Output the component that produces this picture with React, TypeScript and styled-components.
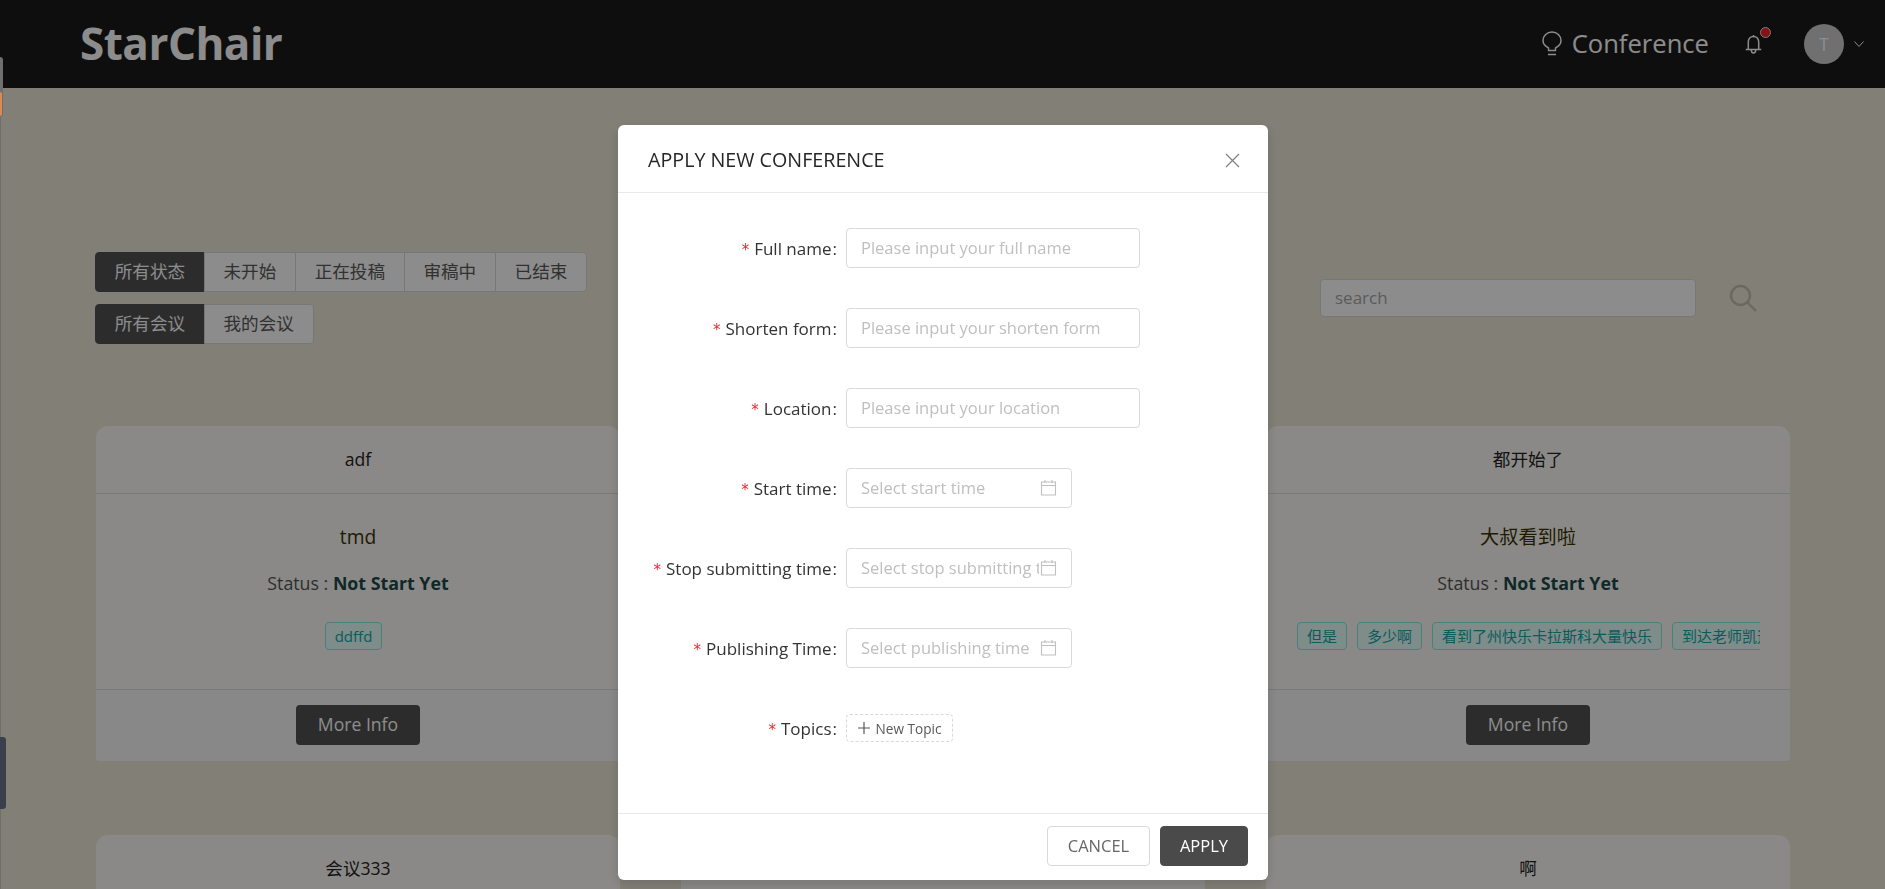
import React from "react";
import styled, { createGlobalStyle } from "styled-components";

const SANS = `"Open Sans", "Noto Sans CJK SC", sans-serif`;

const Global = createGlobalStyle`
  html, body {
    margin: 0;
    height: 100%;
    overflow: hidden;
  }
  body {
    font-family: ${SANS};
    background: #ece7d8;
  }
  * { box-sizing: border-box; }
`;

const Page = styled.div`
  height: 889px;
  overflow: hidden;
  background: #ece7d8;
`;

const Header = styled.header`
  height: 88px;
  background: #1b1b1b;
  display: flex;
  align-items: center;
  justify-content: space-between;
  padding: 0 21px 0 80px;
`;

const Logo = styled.div`
  color: #fff;
  font-size: 44px;
  font-weight: 700;
  letter-spacing: -0.5px;
  margin-bottom: 3px;
`;

const Nav = styled.nav`
  display: flex;
  align-items: center;
`;

const NavLink = styled.div`
  display: flex;
  align-items: center;
  gap: 10px;
  color: #fff;
  font-size: 25.6px;
  margin-right: 36px;
  margin-bottom: 2px;
`;

const BellWrap = styled.div`
  position: relative;
  width: 17px;
  height: 22px;
  margin: 2px 42px 0 0;
  color: #fff;
`;

const Dot = styled.span`
  position: absolute;
  top: -7px;
  right: -9px;
  width: 11px;
  height: 11px;
  border-radius: 50%;
  background: #f5222d;
  border: 1px solid #ddd;
`;

const Avatar = styled.div`
  width: 40px;
  height: 40px;
  border-radius: 50%;
  background: #ccc;
  color: #fff;
  font-size: 18px;
  display: flex;
  align-items: center;
  justify-content: center;
  margin-right: 10px;
`;

const Main = styled.main`
  padding: 164px 95px 0 96px;
`;

const Filters = styled.section`
  display: flex;
  justify-content: space-between;
  margin-left: -1px;
  padding-right: 33px;
  margin-bottom: 82px;
`;

const FilterGroups = styled.div`
  display: flex;
  flex-direction: column;
  align-items: flex-start;
  gap: 12px;
`;

const Segments = styled.div`
  display: flex;
`;

const Segment = styled.div<{ $active?: boolean }>`
  height: 40px;
  line-height: 36px;
  padding: 0 18.7px;
  font-size: 17.6px;
  border: 1px solid ${(p) => (p.$active ? "#505050" : "#d9d9d9")};
  margin-left: -1px;
  background: ${(p) => (p.$active ? "#505050" : "#fff")};
  color: ${(p) => (p.$active ? "#fff" : "#595959")};
  &:first-child {
    margin-left: 0;
    border-radius: 4px 0 0 4px;
  }
  &:last-child {
    border-radius: 0 4px 4px 0;
  }
`;

const SearchRow = styled.div`
  display: flex;
  align-items: center;
  gap: 33px;
  height: 38px;
  margin-top: 27px;
`;

const SearchInput = styled.input`
  width: 376px;
  height: 38px;
  border: 1px solid #d9d9d9;
  border-radius: 4px;
  background: #fff;
  padding: 0 14px 2px;
  font-family: ${SANS};
  font-size: 17px;
  &::placeholder {
    color: #a6a6a6;
    opacity: 1;
  }
`;

const Cards = styled.section`
  display: grid;
  grid-template-columns: repeat(3, 524px);
  justify-content: space-between;
  row-gap: 74px;
`;

const Card = styled.article`
  height: 335px;
  background: #fbfaf6;
  border-radius: 12px 12px 4px 4px;
  display: flex;
  flex-direction: column;
  text-align: center;
`;

const CardTitle = styled.div`
  height: 68px;
  line-height: 66px;
  font-size: 17.6px;
  color: #222;
  border-bottom: 1px solid #ddd;
`;

const CardBody = styled.div`
  height: 195px;
  padding-top: 27px;
`;

const Subject = styled.div`
  font-size: 19.2px;
  line-height: 32px;
  color: #3a3300;
`;

const Status = styled.div`
  font-size: 17.8px;
  line-height: 30px;
  margin-top: 15px;
  color: #555;
`;

const StatusValue = styled.b`
  color: #1d4a4a;
`;

const TagRow = styled.div`
  margin: 24px 30px 0 31px;
  white-space: nowrap;
  overflow: hidden;
  height: 30px;
`;

const Tag = styled.span`
  display: inline-block;
  height: 28px;
  line-height: 26px;
  padding: 0 9px;
  margin-right: 10px;
  font-size: 15px;
  color: #13a8a8;
  background: #e6fffb;
  border: 1px solid #87e8de;
  border-radius: 4px;
`;

const CardFooter = styled.div`
  flex: 1;
  background: #f7f7f7;
  border-top: 1px solid #ddd;
  border-radius: 0 0 4px 4px;
  padding-top: 15px;
`;

const MoreButton = styled.button`
  width: 124px;
  height: 40px;
  border: none;
  border-radius: 4px;
  background: #505050;
  color: #fff;
  padding: 0 0 2px;
  font-family: ${SANS};
  font-size: 17.6px;
`;

const Mask = styled.div`
  position: fixed;
  inset: 0;
  background: rgba(0, 0, 0, 0.45);
`;

const ModalWrap = styled.div`
  position: fixed;
  inset: 0;
  display: flex;
  justify-content: center;
  padding: 125px 0 0 1px;
`;

const Modal = styled.div`
  width: 650px;
  height: 755px;
  background: #fff;
  border-radius: 6px;
  box-shadow: 0 4px 12px rgba(0, 0, 0, 0.15);
  display: flex;
  flex-direction: column;
`;

const ModalHeader = styled.div`
  height: 68px;
  padding: 1px 28px 0 30px;
  border-bottom: 1px solid #e8e8e8;
  display: flex;
  align-items: center;
  justify-content: space-between;
  font-size: 19.7px;
  color: #262626;
`;

const CloseIcon = styled.svg`
  width: 15px;
  height: 15px;
  margin-top: 2px;
  stroke: #808080;
  stroke-width: 1.2;
`;

const ModalForm = styled.form`
  flex: 1;
  padding-top: 35px;
  display: flex;
  flex-direction: column;
  gap: 40px;
`;

const FormRow = styled.div`
  display: flex;
  align-items: center;
  height: 40px;
`;

const Label = styled.label`
  width: 228px;
  text-align: right;
  padding-right: 9px;
  font-size: 17px;
  color: #333;
  white-space: nowrap;
`;

const Star = styled.span`
  color: #f5222d;
  font-family: "DejaVu Sans", sans-serif;
  font-size: 15px;
  margin-right: 5px;
`;

const Colon = styled.span`
  margin-left: 1px;
`;

const TextInput = styled.input`
  width: 294px;
  height: 40px;
  border: 1px solid #d9d9d9;
  border-radius: 4px;
  padding: 0 14px 1px;
  font-family: ${SANS};
  font-size: 16.5px;
  &::placeholder {
    color: #bfbfbf;
    opacity: 1;
  }
`;

const DateBox = styled.div`
  position: relative;
  width: 226px;
  height: 40px;
`;

const DateInput = styled(TextInput)`
  width: 100%;
  padding-right: 32px;
`;

const DateIcon = styled.svg`
  position: absolute;
  right: 15px;
  top: 11px;
  width: 17px;
  height: 17px;
  fill: none;
  stroke: #bfbfbf;
  stroke-width: 1.1;
`;

const NewTopic = styled.div`
  height: 28px;
  width: 107px;
  border: 1px dashed #d9d9d9;
  border-radius: 4px;
  display: flex;
  align-items: center;
  justify-content: center;
  gap: 6px;
  font-size: 13.6px;
  color: #595959;
`;

const ModalFooter = styled.div`
  height: 67px;
  border-top: 1px solid #e8e8e8;
  display: flex;
  justify-content: flex-end;
  align-items: center;
  gap: 10px;
  padding: 0 20px 2px 0;
`;

const FooterButton = styled.button<{ $primary?: boolean }>`
  height: 40px;
  width: ${(p) => (p.$primary ? 88 : 103)}px;
  border-radius: 4px;
  padding: 0 0 2px;
  font-family: ${SANS};
  font-size: 16.5px;
  border: 1px solid ${(p) => (p.$primary ? "#4a4a4a" : "#d9d9d9")};
  background: ${(p) => (p.$primary ? "#4a4a4a" : "#fff")};
  color: ${(p) => (p.$primary ? "#fff" : "#666")};
`;

const EdgeTab = styled.div<{ $top: number; $height: number; $width: number; $color: string }>`
  position: fixed;
  left: 0;
  top: ${(p) => p.$top}px;
  height: ${(p) => p.$height}px;
  width: ${(p) => p.$width}px;
  background: ${(p) => p.$color};
  border-radius: 0 3px 3px 0;
`;

const EdgeLine = styled.div`
  position: fixed;
  left: 0;
  top: 117px;
  bottom: 0;
  width: 1px;
  background: #6f6f6f;
`;

const Bulb = () => (
  <svg width="20" height="25" viewBox="0 0 20 25" fill="none" stroke="currentColor" strokeWidth="1.5">
    <path d="M6 19.5h8M6 23.5h8M6.5 19.5v-2.600C3.500 15.500 1 13 1 9.600 1 4.800 5 1 10 1s9 3.800 9 8.600c0 3.400-2.500 5.900-5.500 7.300v2.600" />
  </svg>
);

const Bell = () => (
  <svg width="17" height="22" viewBox="0 0 17 22" fill="none" stroke="currentColor" strokeWidth="1.5">
    <path d="M8.500 2.500c-3.200 0-5.200 2.400-5.200 5.500v7.500H.8h15.400h-2.500V8c0-3.100-2-5.500-5.200-5.500zM8.500 2.500V1M6.300 16c0 3.900 4.400 3.900 4.400 0" />
  </svg>
);

const Chevron = () => (
  <svg width="10" height="6" viewBox="0 0 10 6" fill="none" stroke="#fff" strokeWidth="1">
    <path d="M.5.500 5 5.500 9.500.500" />
  </svg>
);

const SearchIcon = () => (
  <svg width="28" height="28" viewBox="0 0 28 28" fill="none" stroke="#c4c0ab" strokeWidth="2.400">
    <circle cx="11.500" cy="11.500" r="9.500" />
    <path d="m18.500 18.500 8.500 8.500" />
  </svg>
);

const Calendar = () => (
  <DateIcon viewBox="0 0 17 17">
    <path d="M1.500 3h14v13h-14zM1.500 6.500h14M5 1v3M12 1v3" />
  </DateIcon>
);

const Plus = () => (
  <svg width="12" height="12" viewBox="0 0 12 12" stroke="#595959" strokeWidth="1.200">
    <path d="M6 0v12M0 6h12" />
  </svg>
);

const conferences = [
  { title: "adf", subject: "tmd", tags: ["ddffd"] },
  { title: "", subject: "", tags: [] },
  {
    title: "都开始了",
    subject: "大叔看到啦",
    tags: ["但是", "多少啊", "看到了州快乐卡拉斯科大量快乐", "到达老师凯迪拉克"],
  },
  { title: "会议333", subject: "", tags: [] },
  { title: "", subject: "", tags: [] },
  { title: "啊", subject: "", tags: [] },
];

const textFields = [
  { label: "Full name", placeholder: "Please input your full name" },
  { label: "Shorten form", placeholder: "Please input your shorten form" },
  { label: "Location", placeholder: "Please input your location" },
];

const dateFields = [
  { label: "Start time", placeholder: "Select start time" },
  { label: "Stop submitting time", placeholder: "Select stop submitting time" },
  { label: "Publishing Time", placeholder: "Select publishing time" },
];

const FieldLabel = ({ text }: { text: string }) => (
  <Label>
    <Star>*</Star>
    {text}
    <Colon>:</Colon>
  </Label>
);

export default function App() {
  return (
    <Page>
      <Global />
      <Header>
        <Logo>StarChair</Logo>
        <Nav>
          <NavLink>
            <Bulb />
            Conference
          </NavLink>
          <BellWrap>
            <Bell />
            <Dot />
          </BellWrap>
          <Avatar>T</Avatar>
          <Chevron />
        </Nav>
      </Header>
      <Main>
        <Filters>
          <FilterGroups>
            <Segments>
              <Segment $active>所有状态</Segment>
              <Segment>未开始</Segment>
              <Segment>正在投稿</Segment>
              <Segment>审稿中</Segment>
              <Segment>已结束</Segment>
            </Segments>
            <Segments>
              <Segment $active>所有会议</Segment>
              <Segment>我的会议</Segment>
            </Segments>
          </FilterGroups>
          <SearchRow>
            <SearchInput placeholder="search" />
            <SearchIcon />
          </SearchRow>
        </Filters>
        <Cards>
          {conferences.map((c, i) => (
            <Card key={i}>
              <CardTitle>{c.title}</CardTitle>
              <CardBody>
                <Subject>{c.subject}</Subject>
                <Status>
                  Status : <StatusValue>Not Start Yet</StatusValue>
                </Status>
                <TagRow>
                  {c.tags.map((t) => (
                    <Tag key={t}>{t}</Tag>
                  ))}
                </TagRow>
              </CardBody>
              <CardFooter>
                <MoreButton>More Info</MoreButton>
              </CardFooter>
            </Card>
          ))}
        </Cards>
      </Main>
      <Mask />
      <EdgeLine />
      <EdgeTab $top={57} $height={60} $width={3} $color="#6f6f6f" />
      <EdgeTab $top={92} $height={24} $width={2} $color="#dc8a52" />
      <EdgeTab $top={737} $height={72} $width={6} $color="#3a3f4c" />
      <ModalWrap>
        <Modal>
          <ModalHeader>
            APPLY NEW CONFERENCE
            <CloseIcon viewBox="0 0 15 15">
              <path d="M1 1l13 13M14 1 1 14" />
            </CloseIcon>
          </ModalHeader>
          <ModalForm>
            {textFields.map((f) => (
              <FormRow key={f.label}>
                <FieldLabel text={f.label} />
                <TextInput placeholder={f.placeholder} />
              </FormRow>
            ))}
            {dateFields.map((f) => (
              <FormRow key={f.label}>
                <FieldLabel text={f.label} />
                <DateBox>
                  <DateInput placeholder={f.placeholder} />
                  <Calendar />
                </DateBox>
              </FormRow>
            ))}
            <FormRow>
              <FieldLabel text="Topics" />
              <NewTopic>
                <Plus />
                New Topic
              </NewTopic>
            </FormRow>
          </ModalForm>
          <ModalFooter>
            <FooterButton>CANCEL</FooterButton>
            <FooterButton $primary>APPLY</FooterButton>
          </ModalFooter>
        </Modal>
      </ModalWrap>
    </Page>
  );
}
